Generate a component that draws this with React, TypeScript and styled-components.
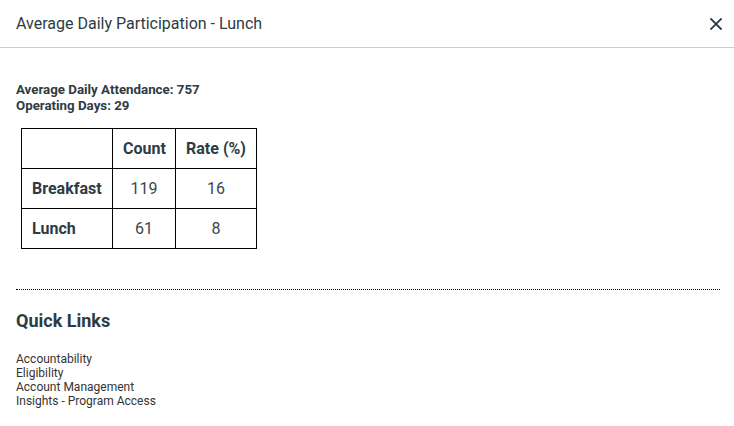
import React from "react";
import styled, { createGlobalStyle } from "styled-components";

const Global = createGlobalStyle`
  html, body { margin: 0; padding: 0; background: #fff; }
  body { font-family: Roboto, "Liberation Sans", Arial, sans-serif; color: #2d3b45; }
`;

const Dialog = styled.div`
  width: 734px;
  height: 426px;
  display: flex;
  flex-direction: column;
  background: #fff;
`;

const Header = styled.header`
  height: 47px;
  border-bottom: 1px solid #c7cdd1;
  display: flex;
  align-items: center;
  justify-content: space-between;
  padding: 0 6px 0 16px;
  box-sizing: content-box;
`;

const Title = styled.h2`
  margin: 0;
  font-size: 16px;
  font-weight: 400;
  color: #2d3b45;
`;

const CloseButton = styled.button`
  border: 0;
  background: none;
  padding: 0;
  width: 24px;
  height: 24px;
  display: flex;
  align-items: center;
  justify-content: center;
  color: #2d3b45;
  cursor: pointer;
`;

const Body = styled.div`
  padding: 34px 14px 0 16px;
  display: flex;
  flex-direction: column;
  align-items: flex-start;
`;

const Stat = styled.div`
  font-size: 13.3px;
  font-weight: 700;
  line-height: 16px;
  color: #2d3b45;
`;

const Table = styled.table`
  border-collapse: collapse;
  table-layout: fixed;
  width: 236px;
  margin: 14px 0 0 5px;
  color: #2d3b45;
`;

const Col = styled.col<{ $w?: number }>`
  width: ${(p) => (p.$w ? `${p.$w}px` : "auto")};
`;

const Cell = styled.td<{ $left?: boolean; $bold?: boolean }>`
  border: 1px solid #000;
  height: 40px;
  box-sizing: border-box;
  padding: 0 10px;
  font-size: 16px;
  font-weight: ${(p) => (p.$bold ? 700 : 400)};
  color: ${(p) => (p.$bold ? "#2d3b45" : "#3d464d")};
  text-align: ${(p) => (p.$left ? "left" : "center")};
  white-space: nowrap;
`;

const Divider = styled.hr`
  border: 0;
  border-top: 1px dotted #000;
  margin: 40px 0 0 0;
  width: 704px;
`;

const SectionTitle = styled.h3`
  margin: 20px 0 0 0;
  font-size: 18px;
  line-height: 22px;
  font-weight: 700;
  color: #2d3b45;
`;

const Links = styled.ul`
  list-style: none;
  margin: 20px 0 0 0;
  padding: 0;
`;

const LinkItem = styled.li`
  font-size: 12px;
  line-height: 14px;
  color: #333;
`;

const rows = [
  { name: "Breakfast", count: 119, rate: 16 },
  { name: "Lunch", count: 61, rate: 8 },
];

export default function App() {
  return (
    <>
      <Global />
      <Dialog>
        <Header>
          <Title>Average Daily Participation - Lunch</Title>
          <CloseButton aria-label="Close">
            <svg width="12" height="12" viewBox="0 0 12 12">
              <path d="M1 1 L11 11 M11 1 L1 11" stroke="currentColor" strokeWidth="1.8" strokeLinecap="square" />
            </svg>
          </CloseButton>
        </Header>
        <Body>
          <Stat>Average Daily Attendance: 757</Stat>
          <Stat>Operating Days: 29</Stat>
          <Table>
            <colgroup>
              <Col $w={91} />
              <Col $w={63} />
              <Col />
            </colgroup>
            <tbody>
              <tr>
                <Cell $left />
                <Cell $bold>Count</Cell>
                <Cell $bold>Rate (%)</Cell>
              </tr>
              {rows.map((r) => (
                <tr key={r.name}>
                  <Cell $left $bold>{r.name}</Cell>
                  <Cell>{r.count}</Cell>
                  <Cell>{r.rate}</Cell>
                </tr>
              ))}
            </tbody>
          </Table>
          <Divider />
          <SectionTitle>Quick Links</SectionTitle>
          <Links>
            <LinkItem>Accountability</LinkItem>
            <LinkItem>Eligibility</LinkItem>
            <LinkItem>Account Management</LinkItem>
            <LinkItem>Insights - Program Access</LinkItem>
          </Links>
        </Body>
      </Dialog>
    </>
  );
}
